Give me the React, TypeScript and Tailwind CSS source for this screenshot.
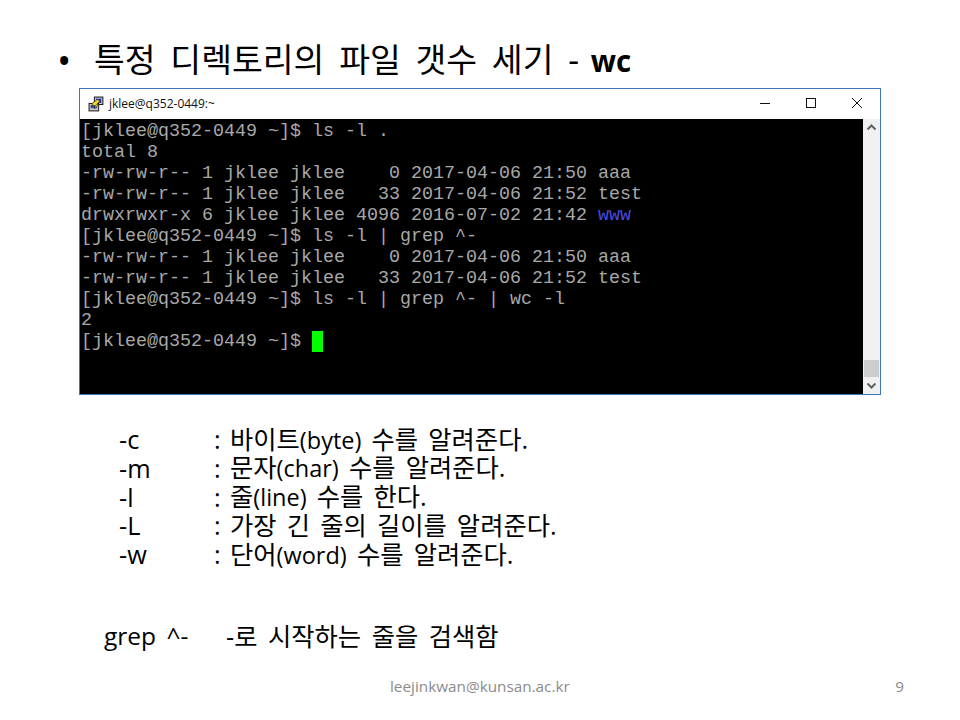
const FONT = '"Open Sans", "Noto Sans CJK KR", sans-serif';

const terminalLines = [
  '[jklee@q352-0449 ~]$ ls -l .',
  'total 8',
  '-rw-rw-r-- 1 jklee jklee    0 2017-04-06 21:50 aaa',
  '-rw-rw-r-- 1 jklee jklee   33 2017-04-06 21:52 test',
];

const terminalLinesAfter = [
  '[jklee@q352-0449 ~]$ ls -l | grep ^-',
  '-rw-rw-r-- 1 jklee jklee    0 2017-04-06 21:50 aaa',
  '-rw-rw-r-- 1 jklee jklee   33 2017-04-06 21:52 test',
  '[jklee@q352-0449 ~]$ ls -l | grep ^- | wc -l',
  '2',
];

const options = [
  { flag: '-c', before: '바이트', latin: '(byte)', after: ' 수를 알려준다.' },
  { flag: '-m', before: '문자', latin: '(char)', after: ' 수를 알려준다.' },
  { flag: '-l', before: '줄', latin: '(line)', after: ' 수를 한다.' },
  { flag: '-L', before: '가장 긴 줄의 길이를 알려준다.', latin: '', after: '' },
  { flag: '-w', before: '단어', latin: '(word)', after: ' 수를 알려준다.' },
];

function PuttyIcon() {
  return (
    <svg width="17" height="17" viewBox="0 0 16 16" className="mr-[4px]">
      <rect x="6" y="1" width="8" height="7" fill="#c4c8e8" stroke="#222" />
      <rect x="7.5" y="2.5" width="5" height="4" fill="#2a3a9a" />
      <rect x="1" y="7" width="9" height="7" fill="#c8c8c8" stroke="#222" />
      <rect x="2.5" y="8.5" width="6" height="3" fill="#3a4a9a" />
      <path d="M4 7 L9 3 L11 5 L8 8 L10 8 L6 12 L7 9 L4 9 Z" fill="#f2d21f" stroke="#222" strokeWidth="0.6" />
    </svg>
  );
}

export default function App() {
  return (
    <div className="w-[960px] h-[720px] bg-white flex flex-col text-black overflow-hidden" style={{ fontFamily: FONT }}>
      {/* Title */}
      <div className="flex items-center h-[48px] mt-[36px] pl-[57px] text-[33.5px] leading-[48px] [word-spacing:6px]">
        <span className="w-[37px] text-[38px]">•</span>
        <span>특정 디렉토리의 파일 갯수 세기 - <b className="text-[29.5px] ml-[-3px]">wc</b></span>
      </div>

      {/* Terminal window */}
      <div className="ml-[79px] mt-[4px] w-[802px] h-[307px] border border-[#3f78b8] flex flex-col bg-white">
        <div className="h-[30px] flex items-center pl-[8px] shrink-0">
          <PuttyIcon />
          <span className="text-[12px] text-[#111]">jklee@q352-0449:~</span>
          <div className="ml-auto flex items-center">
            <svg width="46" height="30" viewBox="0 0 46 30"><path d="M18 14.5h10" stroke="#111" /></svg>
            <svg width="46" height="30" viewBox="0 0 46 30"><rect x="18.5" y="9.5" width="9" height="9" fill="none" stroke="#111" /></svg>
            <svg width="46" height="30" viewBox="0 0 46 30"><path d="M18 9l10 10M28 9l-10 10" stroke="#111" /></svg>
          </div>
        </div>
        <div className="flex flex-1 min-h-0">
          <div
            className="flex-1 bg-black text-[#a8a8a8] text-[18.33px] leading-[21px] pt-[2px] pl-[1px] whitespace-pre"
            style={{ fontFamily: '"Liberation Mono", monospace' }}
          >
            {terminalLines.map((line, i) => (
              <div key={i}>{line}</div>
            ))}
            <div>drwxrwxr-x 6 jklee jklee 4096 2016-07-02 21:42 <span className="text-[#4a4ae0]">www</span></div>
            {terminalLinesAfter.map((line, i) => (
              <div key={i}>{line}</div>
            ))}
            <div className="flex items-center">
              [jklee@q352-0449 ~]$ <span className="w-[11px] h-[21px] bg-[#00ff00]" />
            </div>
          </div>
          {/* Scrollbar */}
          <div className="w-[17px] bg-[#f0f0f0] flex flex-col shrink-0">
            <svg width="17" height="17" viewBox="0 0 17 17"><path d="M4.5 10.5l4-4 4 4" fill="none" stroke="#606060" strokeWidth="2" /></svg>
            <div className="flex-1" />
            <div className="h-[17px] mx-[1px] bg-[#cdcdcd]" />
            <svg width="17" height="17" viewBox="0 0 17 17"><path d="M4.5 6.5l4 4 4-4" fill="none" stroke="#606060" strokeWidth="2" /></svg>
          </div>
        </div>
      </div>

      {/* Option list */}
      <div className="mt-[30px] pl-[119px] flex flex-col text-[25.3px] leading-[28.75px] [word-spacing:3.6px]">
        {options.map(opt => (
          <div key={opt.flag} className="flex items-center h-[28.75px]">
            <span className="w-[95px]">{opt.flag}</span>
            <span className="w-[16px]">:</span>
            <span className="whitespace-pre">
              {opt.before}
              <span className="text-[23.5px]">{opt.latin}</span>
              {opt.after}
            </span>
          </div>
        ))}
      </div>

      {/* grep note */}
      <div className="mt-[51px] pl-[104px] flex text-[25.3px] leading-[32px] [word-spacing:4px]">
        <span className="w-[122px] text-[24.5px]">grep ^-</span>
        <span>-로 시작하는 줄을 검색함</span>
      </div>

      {/* Footer */}
      <div className="mt-[23px] flex items-center text-[15.3px] leading-[22px] text-[#8b8b8b]">
        <span className="ml-[390px]">leejinkwan@kunsan.ac.kr</span>
        <span className="ml-auto mr-[56px]">9</span>
      </div>
    </div>
  );
}
